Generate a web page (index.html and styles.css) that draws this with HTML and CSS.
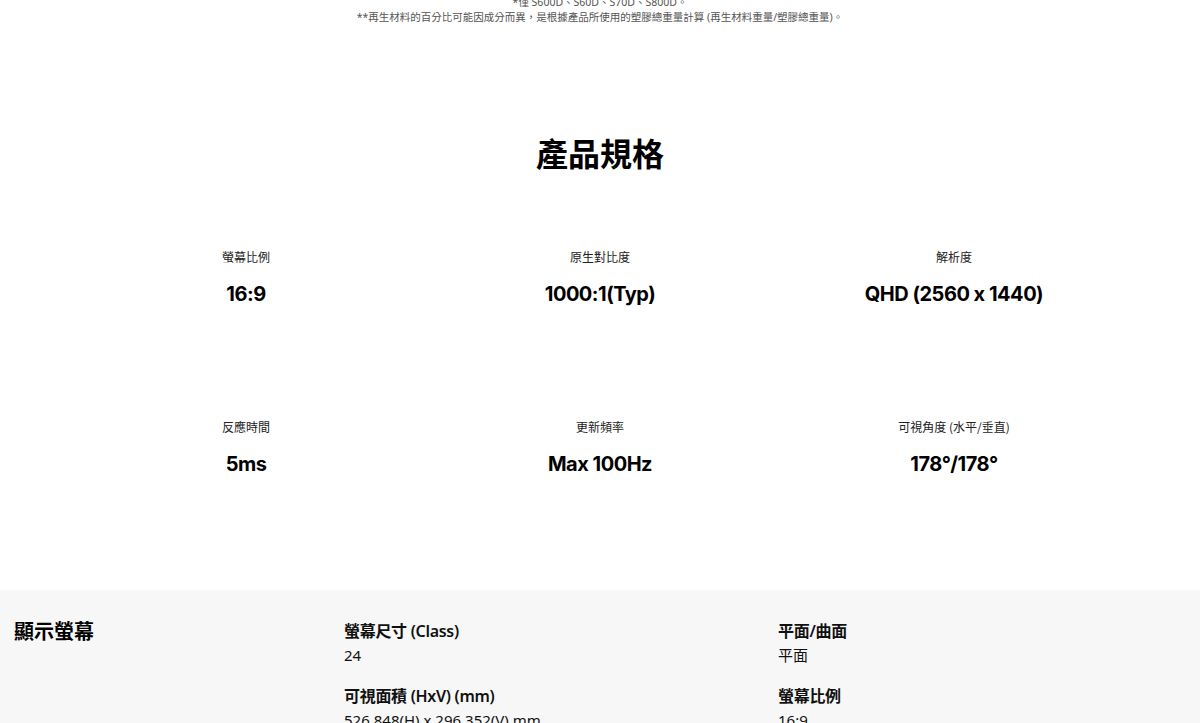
FILE: index.html
```html
<!DOCTYPE html>
<html lang="zh-Hant">
<head>
<meta charset="utf-8">
<link rel="stylesheet" href="styles.css">
</head>
<body>
<div class="notes">
  <p>*僅 S600D、S60D、S70D、S800D。</p>
  <p>**再生材料的百分比可能因成分而異，是根據產品所使用的塑膠總重量計算 (再生材料重量/塑膠總重量)。</p>
</div>
<section class="specs">
  <h2 class="title">產品規格</h2>
  <div class="grid">
    <div class="item"><div class="label">螢幕比例</div><div class="value">16:9</div></div>
    <div class="item"><div class="label">原生對比度</div><div class="value">1000:1(Typ)</div></div>
    <div class="item"><div class="label">解析度</div><div class="value">QHD (2560 x 1440)</div></div>
    <div class="item"><div class="label">反應時間</div><div class="value">5ms</div></div>
    <div class="item"><div class="label">更新頻率</div><div class="value">Max 100Hz</div></div>
    <div class="item"><div class="label">可視角度 (水平/垂直)</div><div class="value">178°/178°</div></div>
  </div>
</section>
<section class="detail">
  <h3 class="cat">顯示螢幕</h3>
  <div class="cols">
    <div class="col">
      <div class="row"><div class="k">螢幕尺寸 (Class)</div><div class="v">24</div></div>
      <div class="row"><div class="k">可視面積 (HxV) (mm)</div><div class="v">526.848(H) x 296.352(V) mm</div></div>
    </div>
    <div class="col">
      <div class="row"><div class="k">平面/曲面</div><div class="v">平面</div></div>
      <div class="row"><div class="k">螢幕比例</div><div class="v">16:9</div></div>
    </div>
  </div>
</section>
</body>
</html>
```
FILE: styles.css
```css
html, body {
  margin: 0;
  padding: 0;
  background: #fff;
  overflow: hidden;
}
body {
  font-family: "Noto Sans", "Noto Sans CJK TC", sans-serif;
  color: #000;
}
.notes {
  margin-top: -5px;
  text-align: center;
  font-size: 10.5px;
  line-height: 15px;
  color: #555;
}
.notes p { margin: 0; }
.specs {
  padding-top: 107px;
}
.title {
  margin: 0;
  text-align: center;
  font-size: 32px;
  line-height: 40px;
  font-weight: 700;
  font-family: "Noto Sans CJK TC", sans-serif;
}
.grid {
  width: 1062px;
  margin: 0 auto;
  padding-top: 75px;
  display: grid;
  grid-template-columns: repeat(3, 1fr);
  row-gap: 110px;
}
.item {
  text-align: center;
}
.label {
  font-size: 12px;
  line-height: 20px;
  color: #222;
  font-family: "Noto Sans CJK TC", sans-serif;
}
.value {
  margin-top: 14px;
  font-size: 20px;
  line-height: 26px;
  font-weight: 700;
  font-family: "Inter", "Noto Sans CJK TC", sans-serif;
  letter-spacing: -0.5px;
}
.detail {
  margin-top: 113px;
  background: #f7f7f7;
  display: flex;
  padding: 28px 0 0 14px;
  height: 200px;
}
.cat {
  margin: 0;
  width: 330px;
  flex: 0 0 330px;
  font-size: 20px;
  line-height: 26px;
  font-weight: 700;
  font-family: "Noto Sans CJK TC", sans-serif;
}
.cols {
  display: flex;
  padding-top: 1px;
}
.col {
  width: 434px;
}
.row {
  margin-bottom: 17px;
}
.k {
  font-size: 16px;
  line-height: 24px;
  font-weight: 600;
  letter-spacing: -0.3px;
  color: #111;
}
.v {
  font-size: 15px;
  line-height: 24px;
  color: #111;
}
```
